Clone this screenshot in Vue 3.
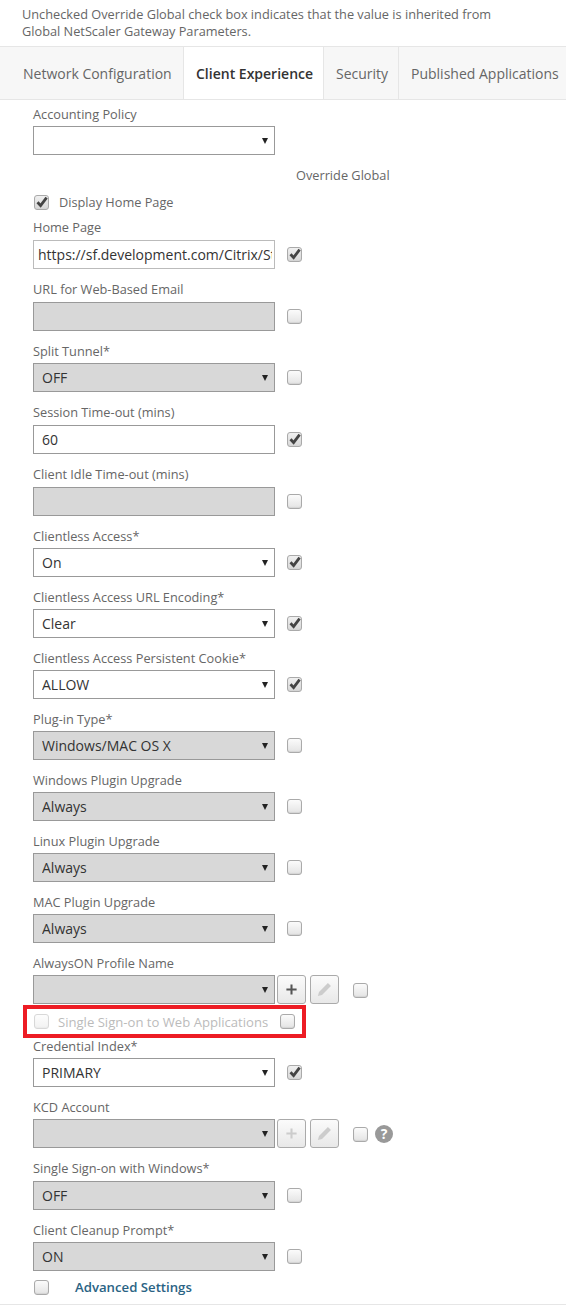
<script setup>
const tabs = [
  { t: 'Network Configuration', w: 184, first: true },
  { t: 'Client Experience', w: 140, active: true },
  { t: 'Security', w: 75 },
  { t: 'Published Applications', w: 167 }
]
const rowsA = [
  { label: 'URL for Web-Based Email', kind: 'input', lead: true },
  { label: 'Split Tunnel*', value: 'OFF', kind: 'select' },
  { label: 'Session Time-out (mins)', value: '60', kind: 'input', on: true, pad: 1 },
  { label: 'Client Idle Time-out (mins)', kind: 'input', pad: 1 },
  { label: 'Clientless Access*', value: 'On', kind: 'select', on: true },
  { label: 'Clientless Access URL Encoding*', value: 'Clear', kind: 'select', on: true },
  { label: 'Clientless Access Persistent Cookie*', value: 'ALLOW', kind: 'select', on: true },
  { label: 'Plug-in Type*', value: 'Windows/MAC OS X', kind: 'select' },
  { label: 'Windows Plugin Upgrade', value: 'Always', kind: 'select' },
  { label: 'Linux Plugin Upgrade', value: 'Always', kind: 'select' },
  { label: 'MAC Plugin Upgrade', value: 'Always', kind: 'select' }
]
const rowsB = [
  { label: 'Single Sign-on with Windows*', value: 'OFF', kind: 'select', pad: 1 },
  { label: 'Client Cleanup Prompt*', value: 'ON', kind: 'select' }
]
</script>

<template>
  <div class="page">
    <p class="note">Unchecked Override Global check box indicates that the value is inherited from<br>Global NetScaler Gateway Parameters.</p>
    <div class="tabs">
      <div v-for="tab in tabs" :key="tab.t" class="tab" :class="{ active: tab.active, first: tab.first }" :style="{ width: tab.w + 'px' }">{{ tab.t }}</div>
    </div>
    <div class="form">
      <div class="label first">Accounting Policy</div>
      <div class="line">
        <div class="field white"><span class="arrow"></span></div>
      </div>
      <div class="override">Override Global</div>
      <div class="check-line">
        <span class="cb on"><svg viewBox="0 0 14 14"><path d="M2.5 7.2 5.6 10.6 11.6 2.6" /></svg></span>
        <span class="check-text">Display Home Page</span>
      </div>
      <div class="label home">Home Page</div>
      <div class="line">
        <input class="url" readonly value="https://sf.development.com/Citrix/StoreWeb" />
        <span class="cb on side"><svg viewBox="0 0 14 14"><path d="M2.5 7.2 5.6 10.6 11.6 2.6" /></svg></span>
      </div>

      <div v-for="r in rowsA" :key="r.label" class="row" :class="{ extra: r.pad || r.lead, lifted: r.kind === 'input' }">
        <div class="label">{{ r.label }}</div>
        <div class="line">
          <div class="field" :class="{ white: r.on }">
            <span v-if="r.value" class="val">{{ r.value }}</span>
            <span v-if="r.kind === 'select'" class="arrow"></span>
          </div>
          <span class="cb side" :class="{ on: r.on }"><svg v-if="r.on" viewBox="0 0 14 14"><path d="M2.5 7.2 5.6 10.6 11.6 2.6" /></svg></span>
        </div>
      </div>

      <div class="row">
        <div class="label">AlwaysON Profile Name</div>
        <div class="line">
          <div class="field"><span class="arrow"></span></div>
          <button class="btn"><svg viewBox="0 0 14 14"><path class="plus" d="M7 1.5v11M1.5 7h11" /></svg></button>
          <button class="btn dim"><svg viewBox="0 0 18 18"><path class="pen" d="M2 16l1.2-4.4L12.6 2.2l3.2 3.2-9.4 9.4z" /></svg></button>
          <span class="cb side wide"></span>
        </div>
      </div>

      <div class="sso">
        <span class="cb faded"></span>
        <span class="sso-text">Single Sign-on to Web Applications</span>
        <span class="cb sso-cb"></span>
      </div>

      <div class="row tight">
        <div class="label">Credential Index*</div>
        <div class="line">
          <div class="field white"><span class="val">PRIMARY</span><span class="arrow"></span></div>
          <span class="cb on side"><svg viewBox="0 0 14 14"><path d="M2.5 7.2 5.6 10.6 11.6 2.6" /></svg></span>
        </div>
      </div>

      <div class="row">
        <div class="label">KCD Account</div>
        <div class="line">
          <div class="field"><span class="arrow"></span></div>
          <button class="btn dim"><svg class="small" viewBox="0 0 14 14"><path class="plus light" d="M7 1.5v11M1.5 7h11" /></svg></button>
          <button class="btn dim"><svg viewBox="0 0 18 18"><path class="pen" d="M2 16l1.2-4.4L12.6 2.2l3.2 3.2-9.4 9.4z" /></svg></button>
          <span class="cb side wide"></span>
          <span class="help">?</span>
        </div>
      </div>

      <div v-for="r in rowsB" :key="r.label" class="row" :class="{ extra: r.pad, lifted: r.pad }">
        <div class="label">{{ r.label }}</div>
        <div class="line">
          <div class="field">
            <span class="val">{{ r.value }}</span>
            <span class="arrow"></span>
          </div>
          <span class="cb side"></span>
        </div>
      </div>

      <div class="advanced">
        <span class="cb"></span>
        <span class="adv-text">Advanced Settings</span>
      </div>
    </div>
    <div class="rule"></div>
  </div>
</template>

<style>
html, body { background: #fff; }
</style>

<style scoped>
.page {
  width: 566px;
  height: 1313px;
  overflow: hidden;
  background: #fff;
  font-family: "Open Sans", sans-serif;
  font-size: 12.75px;
  color: #666;
}
.note {
  margin: 0;
  padding: 6px 0 0 22px;
  line-height: 17px;
  height: 40px;
  color: #666;
  white-space: nowrap;
}
.tabs {
  display: flex;
  height: 54px;
  border-top: 1px solid #e6e6e6;
  border-bottom: 1px solid #e6e6e6;
  background: #f7f7f7;
  box-sizing: border-box;
  overflow: hidden;
}
.tab {
  flex: none;
  box-sizing: border-box;
  border-right: 1px solid #e6e6e6;
  padding-left: 12px;
  line-height: 54px;
  font-size: 14px;
  color: #666;
  white-space: nowrap;
}
.tab.first { padding-left: 23px; }
.tab.active {
  background: #fff;
  font-weight: 600;
  color: #333;
}
.tab:last-child { border-right: 0; }
.form { padding-left: 33px; }
.label {
  height: 20px;
  line-height: 17px;
  color: #666;
}
.lifted .label { line-height: 15px; }
.label.first { margin-top: 6px; }
.label.home { margin-top: 9px; line-height: 15px; }
.line { display: flex; align-items: center; height: 29px; }
.field, .url {
  flex: none;
  width: 242px;
  height: 29px;
  box-sizing: border-box;
  border: 1px solid #999;
  font-family: inherit;
  font-size: 14px;
  color: #333;
}
.field {
  position: relative;
  background: #d8d8d8;
  line-height: 27px;
  padding-left: 8px;
  white-space: nowrap;
}
.field.white { background: #fff; }
.url {
  padding: 0 2px 0 4px;
  border-color: #bbb;
  background: #fff;
  outline: none;
  border-radius: 0;
}
.val { display: block; overflow: hidden; }
.arrow {
  position: absolute;
  right: 6px;
  top: 11px;
  width: 0;
  height: 0;
  border-left: 3.5px solid transparent;
  border-right: 3.5px solid transparent;
  border-top: 6px solid #222;
}
.override {
  margin: 10px 0 0 263px;
  height: 20px;
  line-height: 20px;
}
.check-line {
  display: flex;
  align-items: center;
  height: 18px;
  margin-top: 8px;
}
.check-text { margin-left: 10px; }
.cb {
  flex: none;
  display: inline-block;
  width: 15px;
  height: 15px;
  box-sizing: border-box;
  border: 1px solid #aaa;
  border-radius: 3px;
  background: linear-gradient(#fbfbfb, #e4e4e4);
  box-shadow: inset 0 -1px 1px #d4d4d4;
  position: relative;
}
.cb.on { background: linear-gradient(#f0f0f0, #d8d8d8); }
.cb svg {
  position: absolute;
  left: 0;
  top: -1px;
  width: 14px;
  height: 14px;
}
.cb svg path {
  fill: none;
  stroke: #444;
  stroke-width: 2.8;
}
.check-line .cb { margin-left: 1px; }
.side { margin-left: 12px; }
.side.wide { margin-left: 14px; margin-top: 1px; }
.row { margin-top: 12px; }
.row.extra { margin-top: 13px; }
.row.tight { margin-top: 0; }
.btn {
  flex: none;
  width: 29px;
  height: 29px;
  margin-left: 2px;
  padding: 0;
  border: 1px solid #aaa;
  border-radius: 3px;
  background: linear-gradient(#fbfbfb, #e8e8e8);
  display: flex;
  align-items: center;
  justify-content: center;
  box-sizing: border-box;
}
.btn + .btn { margin-left: 4px; }
.btn svg { width: 13px; height: 13px; }
.btn.dim svg { width: 17px; height: 17px; }
.btn.dim svg.small { width: 13px; height: 13px; }
.plus { fill: none; stroke: #555; stroke-width: 2.2; }
.plus.light { stroke: #ccc; }
.pen { fill: #ccc; }
.help {
  flex: none;
  width: 18px;
  height: 18px;
  margin-left: 7px;
  border-radius: 50%;
  background: #999;
  color: #fff;
  font-weight: 700;
  font-size: 14px;
  line-height: 18px;
  text-align: center;
}
.sso {
  display: flex;
  align-items: center;
  width: 283px;
  height: 33px;
  box-sizing: border-box;
  border: 4px solid #ed1c24;
  margin: 1px 0 0 -10px;
  padding-left: 7px;
}
.faded { opacity: 0.45; }
.sso-text { margin-left: 9px; font-size: 13.1px; color: #bbb; white-space: nowrap; }
.sso-cb { margin-left: 12px; }
.advanced {
  display: flex;
  align-items: center;
  height: 18px;
  margin-top: 7px;
  margin-left: 1px;
}
.adv-text {
  margin-left: 26px;
  font-size: 13.2px;
  font-weight: 600;
  color: #2a6384;
}
.rule {
  height: 1px;
  background: #e6e6e6;
  margin-top: 8px;
}
</style>
